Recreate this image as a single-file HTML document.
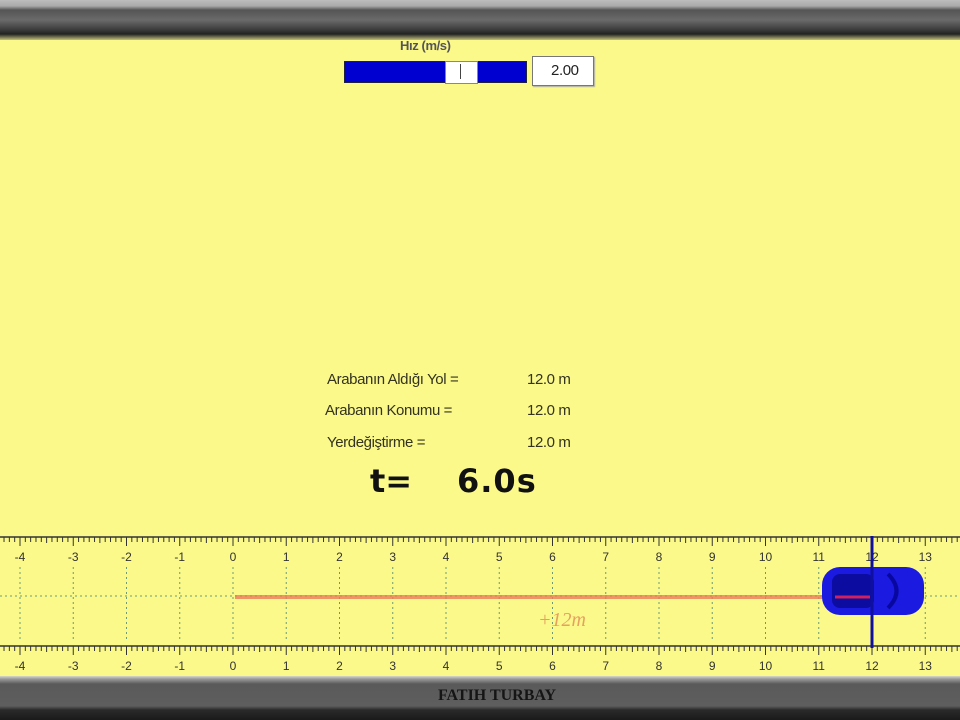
<!DOCTYPE html>
<html><head><meta charset="utf-8"><style>
body{margin:0;width:960px;height:720px;overflow:hidden;background:#fbf98a;position:relative;font-family:"Liberation Sans",sans-serif}
.top{position:absolute;left:0;top:0;width:960px;height:40px;background:linear-gradient(#bdbdbd 0,#aaa 6px,#555 10px,#6a6a6a 20px,#3a3a3a 30px,#222 34px,#8c8a60 38px,#fbf98a 42px)}
.bot{position:absolute;left:0;top:676px;width:960px;height:44px;background:linear-gradient(#d8d8c8 0,#9a9a9a 3px,#5a5a5a 8px,#5e5e5e 30px,#2a2a2a 34px,#1a1a1a 44px)}
.bot span{position:absolute;left:0;width:994px;top:11px;text-align:center;font-family:"Liberation Serif",serif;font-weight:bold;font-size:16px;color:#151515}
.t{position:absolute;font-size:15px;color:#33331f;white-space:nowrap;letter-spacing:-0.4px}
</style></head><body>
<div class="top"></div>
<div class="t" style="left:400px;top:38px;font-size:13px;font-weight:bold;color:#555">Hız (m/s)</div>
<div style="position:absolute;left:344px;top:61px;width:181px;height:20px;background:#0000d0;border:1px solid #202040"></div>
<div style="position:absolute;left:445px;top:61px;width:31px;height:21px;background:#fff;border:1px solid #888"></div>
<div style="position:absolute;left:460px;top:64px;width:1px;height:15px;background:#444"></div>
<div style="position:absolute;left:532px;top:56px;width:60px;height:28px;background:#fff;border:1px solid #777;box-shadow:1px 1px 1px #aaa"></div>
<div class="t" style="left:551px;top:62px;font-size:15px;color:#222">2.00</div>
<div class="t" style="left:327px;top:371px">Arabanın Aldığı Yol =</div>
<div class="t" style="left:325px;top:402px">Arabanın Konumu =</div>
<div class="t" style="left:327px;top:434px">Yerdeğiştirme =</div>
<div class="t" style="left:527px;top:371px">12.0 m</div>
<div class="t" style="left:527px;top:402px">12.0 m</div>
<div class="t" style="left:527px;top:434px">12.0 m</div>
<div class="t" style="left:370px;top:462px;font-family:'DejaVu Sans',sans-serif;font-weight:bold;font-size:32px;color:#111;letter-spacing:0">t=</div>
<div class="t" style="left:457px;top:462px;font-family:'DejaVu Sans',sans-serif;font-weight:bold;font-size:32px;color:#111;letter-spacing:1px">6.0s</div>
<svg id="r" width="960" height="720" style="position:absolute;left:0;top:0"></svg>
<div class="bot"><span>FATIH TURBAY</span></div>
<script>
var s='',u=53.25,o=233;
function X(v){return o+v*u}
s+='<line x1="0" y1="537" x2="960" y2="537" stroke="#333" stroke-width="1.5"/>';
s+='<line x1="0" y1="646" x2="960" y2="646" stroke="#333" stroke-width="1.5"/>';
for(var i=-45;i<=140;i++){var x=X(i/10);if(x<0||x>960)continue;var L=i%10==0?9:(i%5==0?6:5);
s+='<line x1="'+x+'" y1="537" x2="'+x+'" y2="'+(537+L)+'" stroke="#333" stroke-width="1"/>';
s+='<line x1="'+x+'" y1="646" x2="'+x+'" y2="'+(646+L)+'" stroke="#333" stroke-width="1"/>';}
for(var k=-4;k<=13;k++){var x=X(k);
s+='<text x="'+x+'" y="561" font-size="12" text-anchor="middle" fill="#333" font-family="Liberation Sans">'+k+'</text>';
s+='<text x="'+x+'" y="670" font-size="12" text-anchor="middle" fill="#333" font-family="Liberation Sans">'+k+'</text>';
s+='<line x1="'+x+'" y1="567" x2="'+x+'" y2="640" stroke="#6a9a7a" stroke-width="1" stroke-dasharray="2,3"/>';}
s+='<line x1="0" y1="596" x2="960" y2="596" stroke="#6a9a7a" stroke-width="1" stroke-dasharray="2,3"/>';
s+='<line x1="235" y1="597" x2="870" y2="597" stroke="#ec7a58" stroke-opacity="0.8" stroke-width="4"/>';
s+='<text x="538" y="626" font-size="20" font-style="italic" fill="#e6a060" font-family="Liberation Serif">+12m</text>';
s+='<rect x="822" y="567" width="102" height="48" rx="18" fill="#1a1ae0"/>';
s+='<rect x="832" y="574" width="42" height="34" rx="8" fill="#0c0ca0"/>';
s+='<path d="M888 574 Q905 591 888 608" stroke="#0808a0" stroke-width="4" fill="none"/>';
s+='<path d="M835 597 L870 597" stroke="#d02060" stroke-width="3"/>';
s+='<line x1="872" y1="536" x2="872" y2="648" stroke="#1010a0" stroke-width="3"/>';
document.getElementById('r').innerHTML=s;
</script>
</body></html>
